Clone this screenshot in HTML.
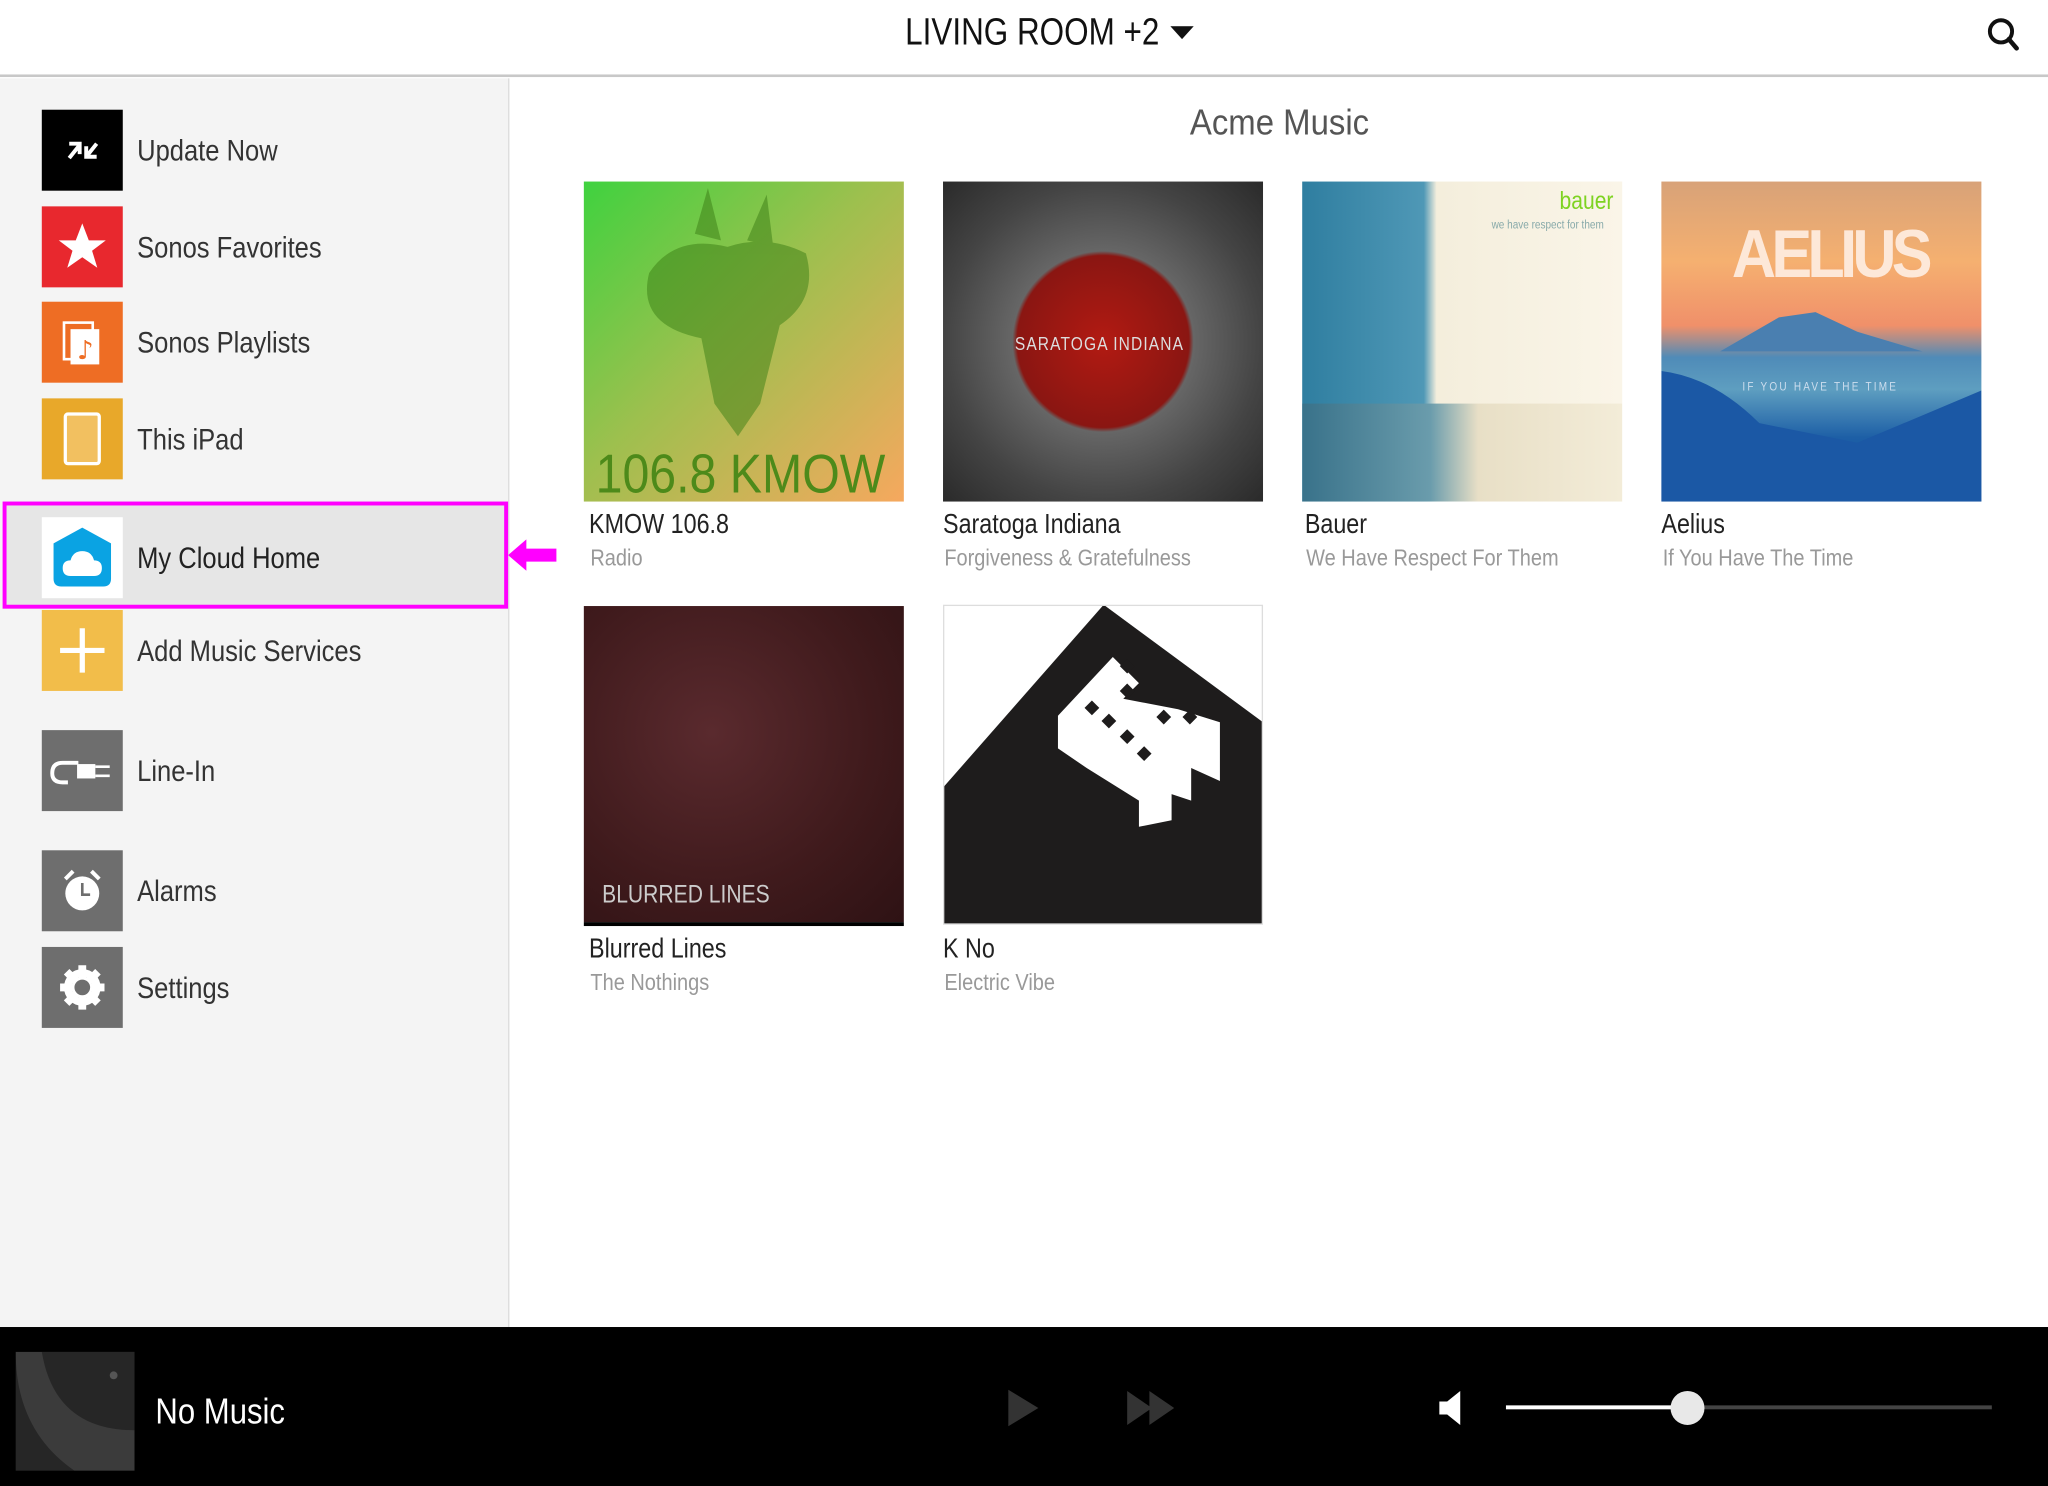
<!DOCTYPE html>
<html><head><meta charset="utf-8"><style>
*{margin:0;padding:0;box-sizing:border-box}
html,body{width:2048px;height:1486px;overflow:hidden;background:#fff}
#s{position:absolute;left:0;top:0;width:1568px;height:1138px;transform:scale(1.306122);transform-origin:0 0;font-family:"Liberation Sans",sans-serif;}
.a{position:absolute}
.n{display:inline-block;transform:scaleX(.85);transform-origin:0 0;white-space:nowrap}
.hdr{left:0;top:0;width:1568px;height:59px;border-bottom:2px solid #c8c8c8;background:#fff}
.side{left:0;top:60px;width:390px;height:956px;background:#f4f4f4;border-right:1px solid #dcdcdc}
.ic{position:absolute;left:32px;width:62px;height:62px}
.lb{position:absolute;left:105px;font-size:23px;color:#333;line-height:30px}
.tile{position:absolute;width:245px;height:245px;overflow:hidden}
.t1{position:absolute;font-size:21px;color:#222}
.t2{position:absolute;font-size:18px;color:#999}
</style></head><body><div id="s">
<div class="a hdr"></div>
<div class="a" style="left:693px;top:8px;font-size:29px;color:#111;line-height:34px"><span class="n" style="transform:scaleX(.83)">LIVING ROOM +2</span></div>
<svg class="a" style="left:896px;top:20px" width="20" height="12"><path d="M0 0H18L9 10Z" fill="#111"/></svg>
<svg class="a" style="left:1520px;top:12px" width="28" height="28"><circle cx="12" cy="12" r="8.5" fill="none" stroke="#111" stroke-width="3"/><path d="M18 18L24 25" stroke="#111" stroke-width="3.5" stroke-linecap="round"/></svg>

<div class="a side"></div>
<div class="a" style="left:2px;top:384px;width:387px;height:82px;background:#e6e6e6;border:3px solid #ff00ff"></div>
<svg class="a" style="left:389px;top:411px" width="38" height="28"><path d="M0 14L14 2V9H37V19H14V26Z" fill="#ff00ff"/></svg>

<div class="ic" style="top:84px;background:#000"><svg width="62" height="62"><g stroke="#fff" stroke-width="3" fill="none"><path d="M21 37L29 27M21 26H29V34"/><path d="M42 26L34 36M34 28V36H42"/></g></svg></div>
<div class="lb" style="top:100px"><span class="n">Update Now</span></div>
<div class="ic" style="top:158px;background:#e8282e"><svg width="62" height="62"><path d="M31 13L36 26H49L38.5 34L42.5 47L31 39L19.5 47L23.5 34L13 26H26Z" fill="#fff"/></svg></div>
<div class="lb" style="top:174px"><span class="n">Sonos Favorites</span></div>
<div class="ic" style="top:231px;background:#ee6d24"><svg width="62" height="62"><rect x="17" y="16" width="22" height="28" fill="none" stroke="#fff" stroke-width="2"/><rect x="22" y="21" width="22" height="27" fill="#fff"/><text x="27" y="44" font-size="20" fill="#ee6d24" font-family="DejaVu Sans">♪</text></svg></div>
<div class="lb" style="top:247px"><span class="n">Sonos Playlists</span></div>
<div class="ic" style="top:305px;background:#e8a82a"><svg width="62" height="62"><rect x="18" y="12" width="26" height="38" rx="2" fill="#f2c060" stroke="#fff" stroke-width="2.5"/></svg></div>
<div class="lb" style="top:321px"><span class="n">This iPad</span></div>
<div class="ic" style="top:396px;background:#fff"><svg width="62" height="62"><path d="M31 8L53 20V47Q53 53 47 53H15Q9 53 9 47V20Z" fill="#0aa3e3"/><path d="M22 45Q16 45 16 39Q16 33 22 33Q24 26 31 26Q38 26 40 33Q46 33 46 39Q46 45 40 45Z" fill="#fff"/></svg></div>
<div class="lb" style="top:412px;color:#222"><span class="n">My Cloud Home</span></div>
<div class="ic" style="top:467px;background:#f2bd4a"><svg width="62" height="62"><path d="M31 14V48M14 31H48" stroke="#fff" stroke-width="4"/></svg></div>
<div class="lb" style="top:483px"><span class="n">Add Music Services</span></div>
<div class="ic" style="top:559px;background:#6e6e6e"><svg width="62" height="62"><path d="M28 25H16Q8 25 8 33Q8 40 16 40H20" fill="none" stroke="#fff" stroke-width="3"/><rect x="27" y="26" width="14" height="11" fill="#fff"/><path d="M41 28H52M41 35H52" stroke="#fff" stroke-width="2"/></svg></div>
<div class="lb" style="top:575px"><span class="n">Line-In</span></div>
<div class="ic" style="top:651px;background:#6e6e6e"><svg width="62" height="62"><circle cx="31" cy="33" r="13" fill="#fff"/><path d="M31 25V34H37" stroke="#6e6e6e" stroke-width="2" fill="none"/><path d="M18 22L24 16M44 22L38 16" stroke="#fff" stroke-width="3"/></svg></div>
<div class="lb" style="top:667px"><span class="n">Alarms</span></div>
<div class="ic" style="top:725px;background:#6e6e6e"><svg width="62" height="62"><circle cx="31" cy="31" r="11" fill="none" stroke="#fff" stroke-width="6"/><g stroke="#fff" stroke-width="6"><path d="M31 14V48M14 31H48M19 19L43 43M43 19L19 43"/></g><circle cx="31" cy="31" r="6" fill="#6e6e6e"/></svg></div>
<div class="lb" style="top:741px"><span class="n">Settings</span></div>

<div class="a" style="left:911px;top:78px;font-size:28px;color:#555"><span class="n" style="transform:scaleX(.9)">Acme Music</span></div>

<div class="tile" style="left:447px;top:139px;background:linear-gradient(135deg,#3fd23f 0%,#9cc04e 45%,#f6a85e 100%)">
<svg width="245" height="245" style="position:absolute;left:0;top:0"><g fill="#3a7d14" opacity="0.5"><path d="M50 70Q70 40 110 50Q140 40 170 55Q180 90 150 110L135 170L118 195L100 170L90 120Q40 110 50 70Z"/><path d="M85 40L95 5L105 45ZM125 45L140 10L145 50Z"/></g></svg>
<div class="a" style="left:9px;top:200px;font-size:42px;color:#4d8a1a"><span class="n" style="transform:scaleX(.88)">106.8 KMOW</span></div></div>
<div class="t1" style="left:451px;top:390px"><span class="n">KMOW 106.8</span></div><div class="t2" style="left:452px;top:417px"><span class="n">Radio</span></div>

<div class="tile" style="left:722px;top:139px;background:radial-gradient(circle at 50% 50%,#b21a12 0%,#8a1612 38%,#666 40%,#444 70%,#2a2a2a 100%)"><div class="a" style="left:55px;top:116px;font-size:14px;color:#ddd;letter-spacing:1px"><span class="n">SARATOGA INDIANA</span></div></div>
<div class="t1" style="left:722px;top:390px"><span class="n">Saratoga Indiana</span></div><div class="t2" style="left:723px;top:417px"><span class="n">Forgiveness &amp; Gratefulness</span></div>

<div class="tile" style="left:997px;top:139px;background:linear-gradient(90deg,#2f7ea0 0%,#4f98b6 38%,#f4eedc 42%,#faf5e8 100%)"><div class="a" style="left:0;top:170px;width:245px;height:75px;background:linear-gradient(90deg,#39728a,#6a9cac 40%,#e8dfc6 55%,#f3ecd8)"></div><div class="a" style="left:197px;top:5px;font-size:19px;color:#7ed321"><span class="n">bauer</span></div><div class="a" style="left:145px;top:28px;font-size:9px;color:#8aa"><span class="n">we have respect for them</span></div></div>
<div class="t1" style="left:999px;top:390px"><span class="n">Bauer</span></div><div class="t2" style="left:1000px;top:417px"><span class="n">We Have Respect For Them</span></div>

<div class="tile" style="left:1272px;top:139px;background:linear-gradient(180deg,#d8a278 0%,#f5b070 25%,#f0906a 45%,#4f8bb8 55%,#5e9ec0 65%,#1d5fa6 80%,#0d4c9a 100%)"><svg width="245" height="245" style="position:absolute;left:0;top:0"><path d="M45 130L90 104L118 100L150 115L200 130Z" fill="#4a7fb0"/><path d="M0 145Q40 150 75 185L150 200L245 160V245H0Z" fill="#1b58a5"/></svg><div class="a" style="left:54px;top:26px;font-size:52px;font-weight:bold;color:#fde8d8;letter-spacing:-4px"><span class="n" style="transform:scaleX(.9)">AELIUS</span></div><div class="a" style="left:62px;top:152px;font-size:9px;color:#cde;letter-spacing:2px"><span class="n">IF YOU HAVE THE TIME</span></div></div>
<div class="t1" style="left:1272px;top:390px"><span class="n">Aelius</span></div><div class="t2" style="left:1273px;top:417px"><span class="n">If You Have The Time</span></div>

<div class="tile" style="left:447px;top:464px;background:radial-gradient(ellipse at 40% 40%,#5a2a2e 0%,#3f1a1c 60%,#2e1214 100%);border-bottom:3px solid #000"><div class="a" style="left:14px;top:211px;font-size:19px;color:#ccc"><span class="n">BLURRED LINES</span></div></div>
<div class="t1" style="left:451px;top:715px"><span class="n">Blurred Lines</span></div><div class="t2" style="left:452px;top:742px"><span class="n">The Nothings</span></div>

<div class="tile" style="left:722px;top:463px;background:#fff;border:1px solid #ddd"><svg width="245" height="245" style="position:absolute;left:-1px;top:-1px"><path d="M0 140L123 0L245 90V245H0Z" fill="#1e1c1c"/><path d="M88 85L130 40L150 60L138 72L180 80L212 90V135L190 125V150L175 145V165L150 170L150 150L110 125L88 110Z" fill="#fff"/><g fill="#1e1c1c"><rect x="137" y="43" width="8" height="8" transform="rotate(45 141 47)"/><rect x="137" y="62" width="8" height="8" transform="rotate(45 141 66)"/><rect x="110" y="75" width="8" height="8" transform="rotate(45 114 79)"/><rect x="123" y="85" width="8" height="8" transform="rotate(45 127 89)"/><rect x="137" y="97" width="8" height="8" transform="rotate(45 141 101)"/><rect x="150" y="110" width="8" height="8" transform="rotate(45 154 114)"/><rect x="165" y="82" width="8" height="8" transform="rotate(45 169 86)"/><rect x="185" y="82" width="8" height="8" transform="rotate(45 189 86)"/></g></svg></div>
<div class="t1" style="left:722px;top:715px"><span class="n">K No</span></div><div class="t2" style="left:723px;top:742px"><span class="n">Electric Vibe</span></div>

<div class="a" style="left:0;top:1016px;width:1568px;height:122px;background:#000"></div>
<div class="a" style="left:12px;top:1035px;width:91px;height:91px;background:#262626;overflow:hidden"><svg width="91" height="91"><path d="M20 0Q30 60 91 60V91H45Q0 60 0 0Z" fill="#3b3b3b"/><circle cx="75" cy="18" r="3" fill="#555"/></svg></div>
<div class="a" style="left:119px;top:1065px;font-size:28px;color:#fff"><span class="n">No Music</span></div>
<svg class="a" style="left:770px;top:1062px" width="30" height="32"><path d="M2 2L25 16L2 30Z" fill="#333"/></svg>
<svg class="a" style="left:862px;top:1064px" width="40" height="28"><path d="M1 1L20 14L1 27ZM18 1L37 14L18 27Z" fill="#333"/></svg>
<svg class="a" style="left:1100px;top:1064px" width="22" height="28"><path d="M2 9H8L18 1V27L8 19H2Z" fill="#fff"/></svg>
<div class="a" style="left:1153px;top:1076px;width:372px;height:3px;background:#444"></div>
<div class="a" style="left:1153px;top:1076px;width:139px;height:3px;background:#fff"></div>
<div class="a" style="left:1279px;top:1065px;width:26px;height:26px;border-radius:50%;background:#e8e8e8"></div>
</div></body></html>
